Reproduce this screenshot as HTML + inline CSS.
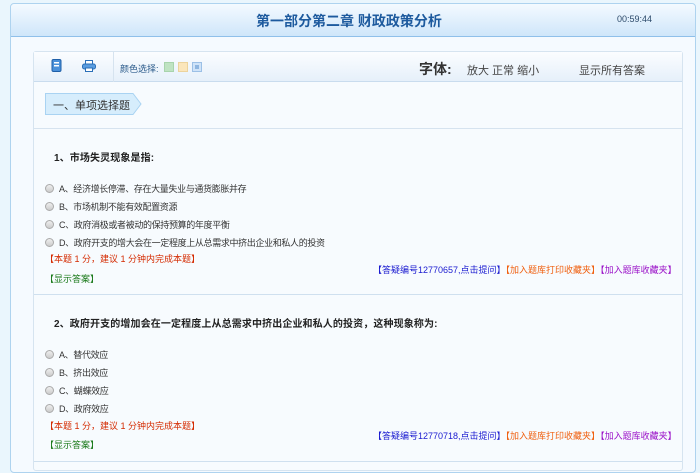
<!DOCTYPE html>
<html><head><meta charset="utf-8"><style>
*{margin:0;padding:0;box-sizing:border-box}
body{width:700px;height:466px;overflow:hidden;background:#eaf6fd;font-family:"Liberation Sans","Noto Sans CJK SC",sans-serif;position:relative}
.abs{position:absolute;white-space:nowrap}
#panel{position:absolute;left:10px;top:3px;width:686px;height:470px;border:1px solid #aed3ef;border-radius:4px;background:#f5faff}
#hdr{position:absolute;left:0;top:0;width:100%;height:33px;background:linear-gradient(#f4faff,#cfe6fa);border-bottom:1px solid #8fc0ea;border-radius:4px 4px 0 0}
#box{position:absolute;left:33px;top:51px;width:650px;height:420px;border:1px solid #d6e4f0;border-radius:3px;background:#f7fbfe}
#tb{position:absolute;left:0;top:0;width:100%;height:30px;background:linear-gradient(#fbfdff,#e6f0fa);border-bottom:1px solid #c9dcee}
.opt{font-size:9px;color:#333;letter-spacing:-0.35px}
.rad{display:inline-block;width:9px;height:9px;border-radius:50%;border:1px solid #aaa;background:linear-gradient(#eee,#ccc);vertical-align:-1px;margin-right:5px}
.red{color:#d42a00;font-size:9px}
.grn{color:#1b7a1b;font-size:9px}
.q{font-size:10px;font-weight:bold;color:#222;letter-spacing:0.12px}
.lk{font-size:9px}
</style></head><body>
<div id="panel"><div id="hdr"></div></div>
<div class="abs" style="left:256px;top:11px;font-size:14px;font-weight:bold;color:#1d5a9e">第一部分第二章 财政政策分析</div>
<div class="abs" style="left:617px;top:14px;font-size:9px;color:#2c4a6a">00:59:44</div>
<div id="box">
 <div id="tb"></div>
 <div style="position:absolute;left:79px;top:0;width:1px;height:30px;background:#d6e3ef"></div>
 <div style="position:absolute;left:0;top:76px;width:100%;height:1px;background:#d6e3ef"></div>
 <div style="position:absolute;left:0;top:242px;width:100%;height:1px;background:#cfe0ef"></div>
 <div style="position:absolute;left:0;top:409px;width:100%;height:1px;background:#cfe0ef"></div>
</div>
<svg class="abs" style="left:51px;top:59px" width="11" height="13"><rect x="1" y="0.5" width="9" height="12" rx="1.5" fill="#4a90d9" stroke="#1f5fa8"/><rect x="3" y="3" width="5" height="1.5" fill="#fff"/><rect x="3" y="6" width="5" height="1.5" fill="#fff"/></svg>
<svg class="abs" style="left:82px;top:60px" width="14" height="12"><rect x="3.5" y="0.5" width="7" height="4" fill="#fff" stroke="#2a6fb8"/><rect x="0.5" y="4" width="13" height="5" rx="2" fill="#5a9de0" stroke="#2a6fb8"/><rect x="3.5" y="8" width="7" height="3.5" fill="#fff" stroke="#2a6fb8"/></svg>
<div class="abs" style="left:120px;top:62px;font-size:9px;color:#2a5a8a">颜色选择:</div>
<div class="abs" style="left:164px;top:62px;width:10px;height:10px;background:#bfe3c2;border:1px solid #a8d4ac"></div>
<div class="abs" style="left:178px;top:62px;width:10px;height:10px;background:#fbe6bb;border:1px solid #ecd39c"></div>
<div class="abs" style="left:192px;top:62px;width:10px;height:10px;background:#cfe3f8;border:1px solid #9cc0e6"><div style="margin:2px;width:4px;height:4px;background:#8fb6e0"></div></div>
<div class="abs" style="left:419px;top:59px;font-size:14px;font-weight:bold;color:#333">字体:</div>
<div class="abs" style="left:467px;top:62px;font-size:11px;color:#444">放大 正常 缩小</div>
<div class="abs" style="left:579px;top:62px;font-size:11px;color:#444">显示所有答案</div>
<svg class="abs" style="left:44px;top:92px" width="100" height="24"><path d="M1.5 1.5 H89 L97 12 L89 22.5 H1.5 Z" fill="#d6edfc" stroke="#a9d3f2"/></svg>
<div class="abs" style="left:53px;top:97px;font-size:11px;color:#333">一、单项选择题</div>
<div class="abs q" style="left:54px;top:149px">1、市场失灵现象是指:</div>
<div class="abs opt" style="left:45px;top:182px"><span class="rad"></span>A、经济增长停滞、存在大量失业与通货膨胀并存</div>
<div class="abs opt" style="left:45px;top:200px"><span class="rad"></span>B、市场机制不能有效配置资源</div>
<div class="abs opt" style="left:45px;top:218px"><span class="rad"></span>C、政府消极或者被动的保持预算的年度平衡</div>
<div class="abs opt" style="left:45px;top:236px"><span class="rad"></span>D、政府开支的增大会在一定程度上从总需求中挤出企业和私人的投资</div>
<div class="abs red" style="left:45px;top:252px">【本题 1 分，建议 1 分钟内完成本题】</div>
<div class="abs lk" style="left:373px;top:263px"><span style="color:#1a1ad0">【答疑编号12770657,点击提问】</span><span style="color:#f06010">【加入题库打印收藏夹】</span><span style="color:#9a10c8">【加入题库收藏夹】</span></div>
<div class="abs grn" style="left:45px;top:272px">【显示答案】</div>
<div class="abs q" style="left:54px;top:315px">2、政府开支的增加会在一定程度上从总需求中挤出企业和私人的投资，这种现象称为:</div>
<div class="abs opt" style="left:45px;top:348px"><span class="rad"></span>A、替代效应</div>
<div class="abs opt" style="left:45px;top:366px"><span class="rad"></span>B、挤出效应</div>
<div class="abs opt" style="left:45px;top:384px"><span class="rad"></span>C、蝴蝶效应</div>
<div class="abs opt" style="left:45px;top:402px"><span class="rad"></span>D、政府效应</div>
<div class="abs red" style="left:45px;top:419px">【本题 1 分，建议 1 分钟内完成本题】</div>
<div class="abs lk" style="left:373px;top:429px"><span style="color:#1a1ad0">【答疑编号12770718,点击提问】</span><span style="color:#f06010">【加入题库打印收藏夹】</span><span style="color:#9a10c8">【加入题库收藏夹】</span></div>
<div class="abs grn" style="left:45px;top:438px">【显示答案】</div>
</body></html>
